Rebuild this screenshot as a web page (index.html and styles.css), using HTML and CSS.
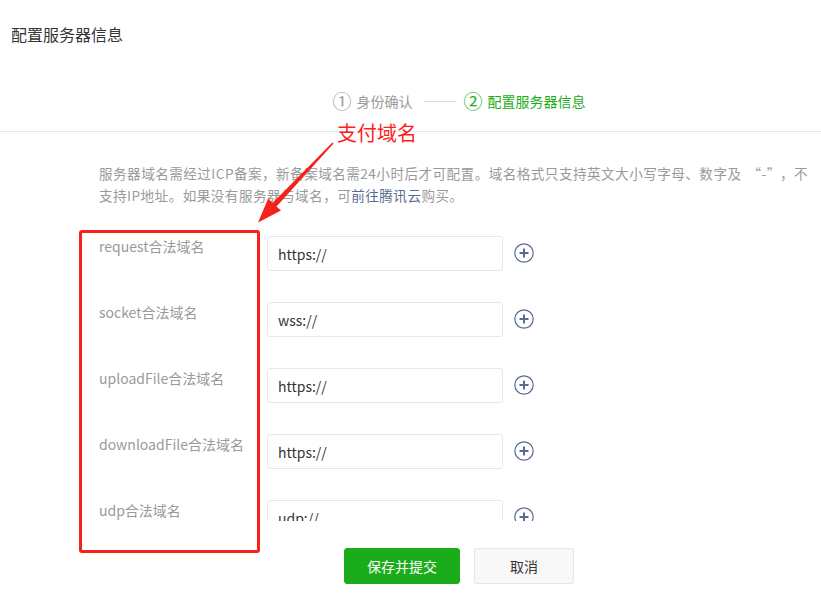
FILE: index.html
```html
<!DOCTYPE html>
<html lang="zh-CN">
<head>
    <meta charset="UTF-8">
    <title>配置服务器信息</title>
    <link rel="stylesheet" href="styles.css">
</head>
<body>
    <div class="header">
        <h2 class="title">配置服务器信息</h2>
        <div class="steps">
            <div class="step done"><span class="num">①</span>身份确认</div>
            <span class="step-line"></span>
            <div class="step current"><span class="num">②</span>配置服务器信息</div>
        </div>
    </div>

    <div class="content">
        <p class="desc">服务器域名需经过ICP备案，新备案域名需24小时后才可配置。域名格式只支持英文大小写字母、数字及<span class="q">“-”</span>，不支持IP地址。如果没有服务器与域名，可<a href="#">前往腾讯云</a>购买。</p>

        <div class="form-scroll">
            <div class="form-row">
                <label>request合法域名</label>
                <input type="text" value="https://">
                <span class="add"><svg width="20" height="20" viewBox="0 0 20 20"><circle cx="10" cy="10" r="9.2" fill="none" stroke="#576b95" stroke-width="1.2"/><path d="M5.5 10h9M10 5.5v9" stroke="#576b95" stroke-width="2"/></svg></span>
            </div>
            <div class="form-row">
                <label>socket合法域名</label>
                <input type="text" value="wss://">
                <span class="add"><svg width="20" height="20" viewBox="0 0 20 20"><circle cx="10" cy="10" r="9.2" fill="none" stroke="#576b95" stroke-width="1.2"/><path d="M5.5 10h9M10 5.5v9" stroke="#576b95" stroke-width="2"/></svg></span>
            </div>
            <div class="form-row">
                <label>uploadFile合法域名</label>
                <input type="text" value="https://">
                <span class="add"><svg width="20" height="20" viewBox="0 0 20 20"><circle cx="10" cy="10" r="9.2" fill="none" stroke="#576b95" stroke-width="1.2"/><path d="M5.5 10h9M10 5.5v9" stroke="#576b95" stroke-width="2"/></svg></span>
            </div>
            <div class="form-row">
                <label>downloadFile合法域名</label>
                <input type="text" value="https://">
                <span class="add"><svg width="20" height="20" viewBox="0 0 20 20"><circle cx="10" cy="10" r="9.2" fill="none" stroke="#576b95" stroke-width="1.2"/><path d="M5.5 10h9M10 5.5v9" stroke="#576b95" stroke-width="2"/></svg></span>
            </div>
            <div class="form-row">
                <label>udp合法域名</label>
                <input type="text" value="udp://">
                <span class="add"><svg width="20" height="20" viewBox="0 0 20 20"><circle cx="10" cy="10" r="9.2" fill="none" stroke="#576b95" stroke-width="1.2"/><path d="M5.5 10h9M10 5.5v9" stroke="#576b95" stroke-width="2"/></svg></span>
            </div>
        </div>

        <div class="actions">
            <button type="button" class="btn btn-primary">保存并提交</button>
            <button type="button" class="btn btn-default">取消</button>
        </div>
    </div>

    <!-- annotation drawn over the screenshot -->
    <div class="note-text">支付域名</div>
    <div class="note-box"></div>
    <svg class="note-arrow" width="821" height="605" viewBox="0 0 821 605">
        <polygon fill="#f5221b" points="332.4,142.5 333.6,143.5 276.5,206.5 281,210.6 258,222.5 268.2,198.6 272.5,202.9"/>
    </svg>
</body>
</html>
```

FILE: styles.css
```css
* {
    margin: 0;
    padding: 0;
    box-sizing: border-box;
    font-family: "Microsoft YaHei", "Noto Sans CJK SC", sans-serif;
}
body {
    background: #fff;
    color: #353535;
    width: 821px;
    height: 605px;
    overflow: hidden;
}
.header {
    padding-top: 22px;
    border-bottom: 1px solid #e7e7eb;
}
.title {
    font-size: 16px;
    font-weight: normal;
    line-height: 24px;
    padding-left: 11px;
    color: #353535;
}
.steps {
    display: flex;
    align-items: center;
    justify-content: center;
    padding: 0 2px 18px 99px;
    margin-top: 43px;
    height: 42px;
    font-size: 14px;
    line-height: 24px;
}
.step {
    display: flex;
    align-items: center;
}
.step .num {
    font-size: 19px;
    margin-right: 5px;
}
.step.done {
    color: #9a9a9a;
}
.step.current {
    color: #1aad19;
}
.step-line {
    width: 32px;
    height: 1px;
    background: #dcdcdc;
    margin: 0 8px 0 11px;
}
.content {
    padding: 30px 2px 0 99px;
}
.desc {
    font-size: 13.6px;
    line-height: 22px;
    color: #9a9a9a;
    letter-spacing: 0.45px;
    margin-right: 7px;
}
.desc .q {
    padding: 0 6px;
}
.desc a {
    color: #576b95;
    text-decoration: none;
}
.form-scroll {
    margin-top: 30px;
    height: 285px;
    overflow: hidden;
}
.form-row {
    display: flex;
    align-items: flex-start;
    margin-bottom: 31px;
}
.form-row label {
    width: 168px;
    font-size: 14px;
    line-height: 20px;
    color: #9a9a9a;
}
.form-row input {
    width: 236px;
    height: 35px;
    border: 1px solid #e7e7eb;
    border-radius: 3px;
    padding: 0 10px;
    font-size: 14px;
    color: #353535;
    outline: none;
}
.add {
    display: flex;
    margin: 7px 0 0 11px;
}
.actions {
    display: flex;
    justify-content: center;
    gap: 14px;
    margin-top: 27px;
}
.btn {
    height: 36px;
    border-radius: 3px;
    font-size: 14px;
    cursor: pointer;
}
.btn-primary {
    width: 116px;
    background: #1aad19;
    border: 1px solid #1aad19;
    color: #fff;
}
.btn-default {
    width: 100px;
    background: #f8f8f8;
    border: 1px solid #e5e5e5;
    color: #353535;
}
.note-text {
    position: absolute;
    left: 337px;
    top: 119px;
    font-size: 20px;
    line-height: 28px;
    color: #ff1e1e;
}
.note-box {
    position: absolute;
    left: 79px;
    top: 230px;
    width: 181px;
    height: 323px;
    border: 3px solid #f5221b;
    border-radius: 3px;
}
.note-arrow {
    position: absolute;
    left: 0;
    top: 0;
    pointer-events: none;
}
```
